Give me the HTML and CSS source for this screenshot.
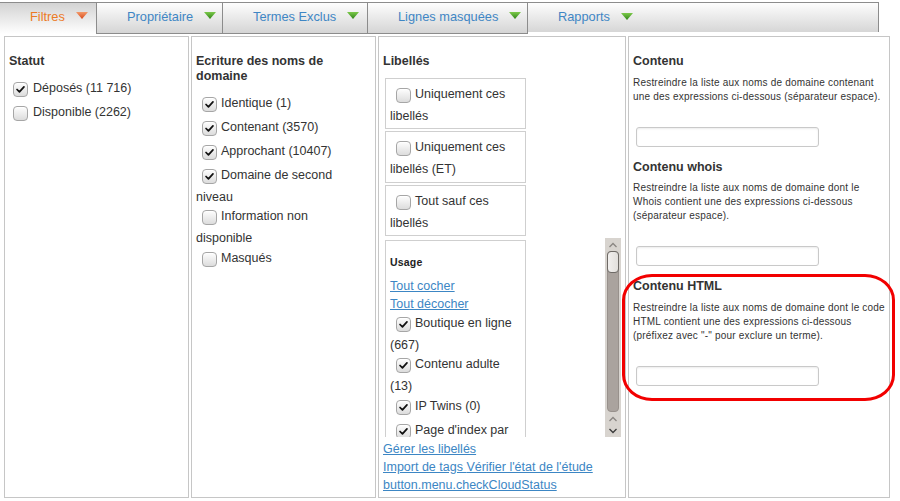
FILE: index.html
```html
<!DOCTYPE html>
<html lang="fr">
<head>
<meta charset="utf-8">
<title>Filtres</title>
<link rel="stylesheet" href="styles.css">
</head>
<body>
<div class="tabs">
  <div class="tab active t1"><span class="tab-label">Filtres</span><svg class="arrow" width="12" height="7" viewBox="0 0 12 7"><defs><linearGradient id="go" x1="0" y1="0" x2="0" y2="1"><stop offset="0" stop-color="#f39a6a"/><stop offset="1" stop-color="#d9491a"/></linearGradient></defs><polygon points="0,0 12,0 6,7" fill="url(#go)"/></svg></div>
  <div class="tab t2"><span class="tab-label">Propriétaire</span><svg class="arrow" width="12" height="7" viewBox="0 0 12 7"><defs><linearGradient id="gg" x1="0" y1="0" x2="0" y2="1"><stop offset="0" stop-color="#7cc94a"/><stop offset="1" stop-color="#2f8418"/></linearGradient></defs><polygon points="0,0 12,0 6,7" fill="url(#gg)"/></svg></div>
  <div class="tab t3"><span class="tab-label">Termes Exclus</span><svg class="arrow" width="12" height="7" viewBox="0 0 12 7"><polygon points="0,0 12,0 6,7" fill="url(#gg)"/></svg></div>
  <div class="tab t4"><span class="tab-label">Lignes masquées</span><svg class="arrow" width="12" height="7" viewBox="0 0 12 7"><polygon points="0,0 12,0 6,7" fill="url(#gg)"/></svg></div>
  <div class="tab t5 last"><span class="tab-label">Rapports</span><svg class="arrow" width="12" height="7" viewBox="0 0 12 7"><polygon points="0,0 12,0 6,7" fill="url(#gg)"/></svg></div>
</div>

<div class="panels">
  <section class="panel p1">
    <h3 class="ph">Statut</h3>
    <div class="item"><span class="cb on"><svg viewBox="0 0 15 15"><path d="M3.5 7.5 L6.3 10.3 L11.5 4.5"/></svg></span>Déposés (11 716)</div>
    <div class="item"><span class="cb"></span>Disponible (2262)</div>
  </section>

  <section class="panel p2">
    <h3 class="ph">Ecriture des noms de domaine</h3>
    <div class="item"><span class="cb on"><svg viewBox="0 0 15 15"><path d="M3.5 7.5 L6.3 10.3 L11.5 4.5"/></svg></span>Identique (1)</div>
    <div class="item"><span class="cb on"><svg viewBox="0 0 15 15"><path d="M3.5 7.5 L6.3 10.3 L11.5 4.5"/></svg></span>Contenant (3570)</div>
    <div class="item"><span class="cb on"><svg viewBox="0 0 15 15"><path d="M3.5 7.5 L6.3 10.3 L11.5 4.5"/></svg></span>Approchant (10407)</div>
    <div class="item"><span class="cb on"><svg viewBox="0 0 15 15"><path d="M3.5 7.5 L6.3 10.3 L11.5 4.5"/></svg></span>Domaine de second niveau</div>
    <div class="item"><span class="cb"></span>Information non disponible</div>
    <div class="item"><span class="cb"></span>Masqués</div>
  </section>

  <section class="panel p3">
    <h3 class="ph">Libellés</h3>
    <div class="lbox"><div class="item"><span class="cb"></span>Uniquement ces libellés</div></div>
    <div class="lbox"><div class="item"><span class="cb"></span>Uniquement ces libellés (ET)</div></div>
    <div class="lbox"><div class="item"><span class="cb"></span>Tout sauf ces libellés</div></div>
    <div class="scroll">
      <div class="scroll-content">
        <div class="lbox usage">
          <div class="usage-title">Usage</div>
          <a class="link" href="#">Tout cocher</a>
          <a class="link" href="#">Tout décocher</a>
          <div class="item"><span class="cb on"><svg viewBox="0 0 15 15"><path d="M3.5 7.5 L6.3 10.3 L11.5 4.5"/></svg></span>Boutique en ligne (667)</div>
          <div class="item"><span class="cb on"><svg viewBox="0 0 15 15"><path d="M3.5 7.5 L6.3 10.3 L11.5 4.5"/></svg></span>Contenu adulte (13)</div>
          <div class="item"><span class="cb on"><svg viewBox="0 0 15 15"><path d="M3.5 7.5 L6.3 10.3 L11.5 4.5"/></svg></span>IP Twins (0)</div>
          <div class="item"><span class="cb on"><svg viewBox="0 0 15 15"><path d="M3.5 7.5 L6.3 10.3 L11.5 4.5"/></svg></span>Page d'index par défaut</div>
          <div class="item"><span class="cb on"><svg viewBox="0 0 15 15"><path d="M3.5 7.5 L6.3 10.3 L11.5 4.5"/></svg></span>Parking</div>
        </div>
      </div>
      <div class="sbar">
        <div class="sb-btn"><svg width="10" height="6" viewBox="0 0 10 6"><polyline points="1.5,5 5,1.5 8.5,5" class="chev light"/></svg></div>
        <div class="sb-track"><div class="sb-thumb"></div></div>
        <div class="sb-btn"><svg width="10" height="6" viewBox="0 0 10 6"><polyline points="1.5,5 5,1.5 8.5,5" class="chev light"/></svg></div>
        <div class="sb-btn"><svg width="10" height="6" viewBox="0 0 10 6"><polyline points="1.5,1 5,4.5 8.5,1" class="chev"/></svg></div>
      </div>
    </div>
    <div class="links">
      <a class="link" href="#">Gérer les libellés</a>
      <div><a class="link" href="#">Import de tags </a><a class="link" href="#">Vérifier l'état de l'étude</a></div>
      <a class="link" href="#">button.menu.checkCloudStatus</a>
    </div>
  </section>

  <section class="panel p4">
    <h3 class="ph ph4">Contenu</h3>
    <p class="desc">Restreindre la liste aux noms de domaine contenant une des expressions ci-dessous (séparateur espace).</p>
    <input class="field" type="text">
    <h3 class="ph ph4 next">Contenu whois</h3>
    <p class="desc">Restreindre la liste aux noms de domaine dont le Whois contient une des expressions ci-dessous (séparateur espace).</p>
    <input class="field" type="text">
    <h3 class="ph ph4 next">Contenu HTML</h3>
    <p class="desc">Restreindre la liste aux noms de domaine dont le code HTML contient une des expressions ci-dessous (préfixez avec "-" pour exclure un terme).</p>
    <input class="field" type="text">
  </section>
</div>

<div class="annotation"></div>
</body>
</html>
```
FILE: styles.css
```css
* { box-sizing: border-box; }
html, body { margin: 0; padding: 0; background: #fff; }
body {
  font-family: "Liberation Sans", Arial, sans-serif;
  color: #333;
  position: relative;
  width: 900px;
  height: 501px;
  overflow: hidden;
}

/* ---------- tabs ---------- */
.tabs {
  display: flex;
  margin-top: 2px;
  height: 32px;
}
.tab {
  display: flex;
  align-items: center;
  padding-left: 30px;
  height: 32px;
  border-top: 1px solid #8c8c8c;
  border-right: 1px solid #8c8c8c;
  border-bottom: 1px solid #8c8c8c;
  background: linear-gradient(#fdfdfd, #d5d5d5);
  font-size: 12.8px;
  color: #3f86c4;
  padding-bottom: 4px;
}
.tab .arrow { margin-left: 11px; margin-top: -1px; flex: none; }
.tab.active {
  color: #ec7a24;
  border-bottom: none;
  background: linear-gradient(#d3d3d3, #ffffff);
  padding-bottom: 5px;
}
.tab.last {
  height: 30px;
  border-bottom: none;
  background: linear-gradient(#fdfdfd, #d6d6d6);
  padding-bottom: 2px;
}
.t1 { width: 97px; }
.t2 { width: 126px; }
.t3 { width: 145px; }
.t4 { width: 160px; }
.t5 { width: 351px; }

/* ---------- panels ---------- */
.panels {
  display: flex;
  gap: 2px;
  margin: 2px 0 0 4px;
  height: 462px;
}
.panel {
  border: 1px solid #c6c6c6;
  padding: 17px 4px 0 4px;
  font-size: 12.5px;
}
.p1 { width: 185px; padding-right: 10px; }
.p2 { width: 185px; padding-right: 10px; }
.p3 { width: 248px; }
.p4 { width: 262px; padding-right: 0; }

.ph {
  margin: 0 0 8.5px 0;
  font-size: 12.5px;
  line-height: 15px;
  font-weight: bold;
  color: #333;
}

.item {
  line-height: 17.5px;
}
.cb {
  display: inline-block;
  width: 15px;
  height: 15px;
  border: 1px solid #a6a6a6;
  border-radius: 4px;
  background: linear-gradient(#fefefe, #dcdcdc);
  vertical-align: -10px;
  margin: 4px 4px 5px 6px;
  box-shadow: inset 0 1px 0 #fff;
}
.p1 .cb { margin-left: 4px; margin-right: 5px; }
.cb svg {
  display: block;
  width: 13px;
  height: 13px;
}
.cb svg path {
  fill: none;
  stroke: #111;
  stroke-width: 2;
  stroke-linecap: round;
  stroke-linejoin: round;
}

/* libellés boxes */
.lbox {
  width: 141px;
  margin: 0 0 2px 2px;
  border: 1px solid #cfcfcf;
  padding: 5px 4px 3px 4px;
}
.scroll {
  display: flex;
  height: 199px;
  margin-left: 2px;
}
.scroll-content {
  width: 220px;
  overflow: hidden;
  padding-top: 2px;
}
.usage { margin: 0; padding-top: 14px; }
.usage-title {
  font-size: 10.5px;
  font-weight: bold;
  line-height: 14px;
  letter-spacing: 0.2px;
  margin-bottom: 7.5px;
  color: #222;
}
.link {
  display: block;
  color: #3c86c4;
  text-decoration: underline;
  line-height: 18px;
  font-size: 12.5px;
}
.links {
  margin-top: 3px;
}
.links div { line-height: 18px; }
.links div .link { display: inline; }

/* fake scrollbar */
.sbar {
  width: 16px;
  height: 199px;
  background: #d8d4cf;
  display: flex;
  flex-direction: column;
  padding: 0 2px;
}
.sb-btn {
  height: 12px;
  display: flex;
  align-items: center;
  justify-content: center;
  flex: none;
}
.sb-btn:first-child { height: 13px; }
.sb-track {
  flex: 1;
  background: #aaa39e;
  border-radius: 4px;
  border: 1px solid #98918c;
  margin: 0 0 1px 0;
}
.sb-thumb {
  height: 22px;
  margin: -1px -1px 0 -1px;
  background: linear-gradient(90deg, #f2f0ee, #e2dfdc);
  border: 1px solid #6e6a66;
  border-radius: 4px;
}
.chev { fill: none; stroke: #3a3a3a; stroke-width: 1.3; }
.chev.light { stroke: #8a8682; }

/* panel 4 */
.ph4 { margin-bottom: 6.5px; }
.ph4.next { margin-top: 13px; }
.desc {
  margin: 0 0 23px 0;
  font-size: 10px;
  letter-spacing: 0.2px;
  line-height: 14px;
  color: #333;
}
.field {
  display: block;
  width: 183px;
  height: 20px;
  margin: 0 0 0 3px;
  border: 1px solid #c9c9c9;
  border-radius: 3px;
  background: #fff;
  box-shadow: inset 0 1px 2px rgba(0,0,0,0.08);
  padding: 0;
}

/* red highlight annotation drawn over the page */
.annotation {
  position: absolute;
  left: 622px;
  top: 274px;
  width: 273px;
  height: 127px;
  border: 3px solid #f20000;
  border-radius: 30px / 26px;
  pointer-events: none;
}
```
